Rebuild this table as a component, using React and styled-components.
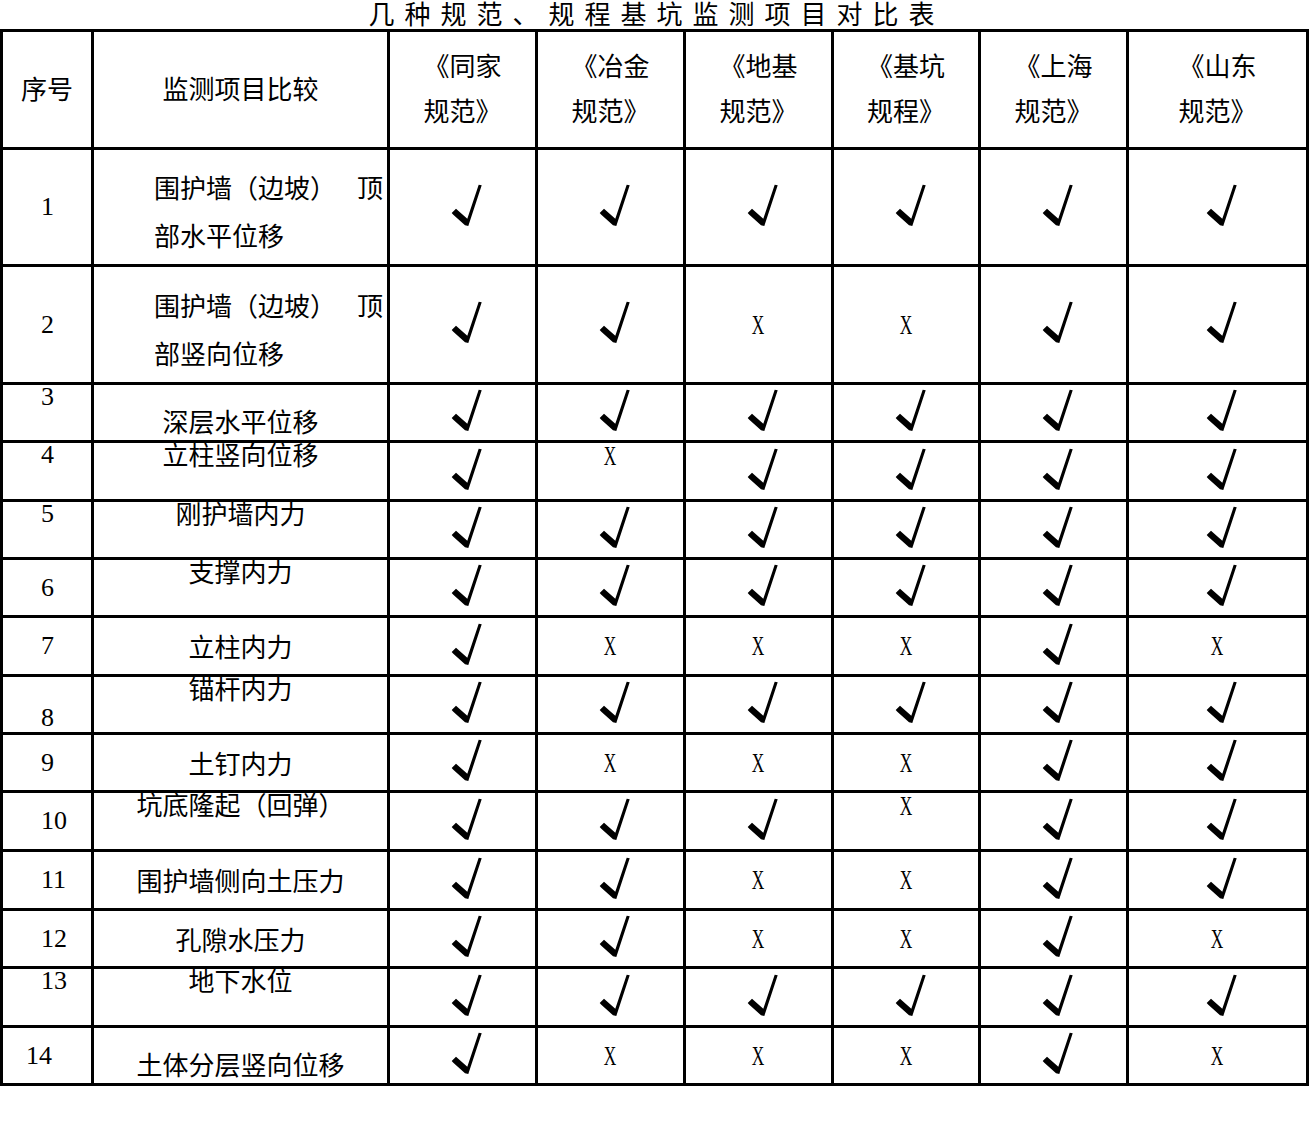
import React from 'react'
import styled, { createGlobalStyle } from 'styled-components'

const GlobalStyle = createGlobalStyle`
  html, body {
    margin: 0;
    padding: 0;
    background: #fff;
  }
  body {
    font-family: "Noto Sans CJK SC", sans-serif;
    color: #000;
  }
`

const Page = styled.div`
  width: 1312px;
  min-height: 1125px;
`

const Title = styled.h1`
  margin: 0;
  width: 1309px;
  height: 29px;
  box-sizing: border-box;
  padding-left: 4px;
  display: flex;
  justify-content: center;
  font-size: 26px;
  line-height: 26px;
  font-weight: 400;
  letter-spacing: 10px;
  white-space: nowrap;
`

const Sheet = styled.div`
  display: grid;
  grid-template-columns: 88px 293px 145px 145px 145px 144px 145px 177px;
  grid-template-rows: 115px 114px 115px 55px 56px 55px 55px 56px 55px 55px 56px 56px 55px 56px 55px;
  gap: 3px;
  padding: 3px;
  width: max-content;
  background: #000;
`

const Cell = styled.div`
  background: #fff;
  display: flex;
  justify-content: ${(p) => p.$h || 'center'};
  align-items: ${(p) => p.$v || 'center'};
  min-width: 0;
  box-sizing: border-box;
`

const HeadCell = styled(Cell)`
  padding-bottom: 5px;
  font-size: 26px;
  line-height: 45px;
  text-align: center;
`

const NumCell = styled(Cell)`
  justify-content: flex-start;
  padding-left: ${(p) => p.$pl}px;
  padding-bottom: ${(p) => (p.$v === 'flex-end' ? 2 : 0)}px;
  font-family: "Liberation Serif", serif;
  font-size: 26px;
  line-height: 24px;
`

const LabelCell = styled(Cell)`
  padding-bottom: ${(p) => (p.$v === 'flex-end' ? 8 : 0)}px;
  font-size: 26px;
  line-height: 22px;
  white-space: nowrap;
`

const WrapCell = styled(Cell)`
  flex-direction: column;
  align-items: stretch;
  padding: 8px 4px 0 60px;
  font-size: 26px;
  line-height: 48px;
`

const SpreadLine = styled.div`
  display: flex;
  justify-content: space-between;
`

const MarkCell = styled(Cell)``

const Tick = styled.svg`
  margin: 0 0 4px 8px;
  display: block;
`

const Cross = styled.span`
  display: inline-block;
  font-family: "Liberation Serif", serif;
  font-size: 28px;
  line-height: 26px;
  transform: scaleX(0.62);
`

const align = { start: 'flex-start', center: 'center', end: 'flex-end' }

const heads = [
  ['《同家', '规范》'],
  ['《冶金', '规范》'],
  ['《地基', '规范》'],
  ['《基坑', '规程》'],
  ['《上海', '规范》'],
  ['《山东', '规范》'],
]

const rows = [
  { n: '1', lines: ['围护墙（边坡）', '顶', '部水平位移'], marks: '111111' },
  { n: '2', lines: ['围护墙（边坡）', '顶', '部竖向位移'], marks: '110011' },
  { n: '3', label: '深层水平位移', nv: 'start', lv: 'end', marks: '111111' },
  { n: '4', label: '立柱竖向位移', nv: 'start', lv: 'start', xv: 'start', marks: '101111' },
  { n: '5', label: '刚护墙内力', nv: 'start', lv: 'start', marks: '111111' },
  { n: '6', label: '支撑内力', lv: 'start', marks: '111111' },
  { n: '7', label: '立柱内力', marks: '100010' },
  { n: '8', label: '锚杆内力', nv: 'end', lv: 'start', marks: '111111' },
  { n: '9', label: '土钉内力', marks: '100011' },
  { n: '10', label: '坑底隆起（回弹）', lv: 'start', xv: 'start', marks: '111011' },
  { n: '11', label: '围护墙侧向土压力', marks: '110011' },
  { n: '12', label: '孔隙水压力', marks: '110010' },
  { n: '13', label: '地下水位', nv: 'start', lv: 'start', marks: '111111' },
  { n: '14', label: '土体分层竖向位移', lv: 'end', pl: 23, marks: '100010' },
]

function CheckMark() {
  return (
    <Tick width='33' height='45' viewBox='0 0 33 45'>
      <polygon
        points='1.7,30 6,25.7 17.3,35.7 28.7,1.7 31.7,2.3 18.3,43 15,42.3 3.3,31.7'
        fill='#000'
      />
    </Tick>
  )
}

export default function App() {
  return (
    <Page>
      <GlobalStyle />
      <Title>几种规范、规程基坑监测项目对比表</Title>
      <Sheet>
        <HeadCell>序号</HeadCell>
        <HeadCell>监测项目比较</HeadCell>
        {heads.map((h) => (
          <HeadCell key={h[0]}>
            <div>
              {h[0]}
              <br />
              {h[1]}
            </div>
          </HeadCell>
        ))}

        {rows.map((row) => (
          <React.Fragment key={row.n}>
            <NumCell
              $v={align[row.nv || 'center']}
              $pl={row.pl || 38}
            >
              {row.n}
            </NumCell>
            {row.lines
              ? (
                <WrapCell>
                  <SpreadLine>
                    <span>{row.lines[0]}</span>
                    <span>{row.lines[1]}</span>
                  </SpreadLine>
                  <div>{row.lines[2]}</div>
                </WrapCell>
              )
              : (
                <LabelCell $v={align[row.lv || 'center']}>{row.label}</LabelCell>
              )}
            {row.marks.split('').map((m, i) => (
              <MarkCell
                key={i}
                $v={m === '1' ? 'center' : align[row.xv || 'center']}
              >
                {m === '1' ? <CheckMark /> : <Cross>X</Cross>}
              </MarkCell>
            ))}
          </React.Fragment>
        ))}
      </Sheet>
    </Page>
  )
}
